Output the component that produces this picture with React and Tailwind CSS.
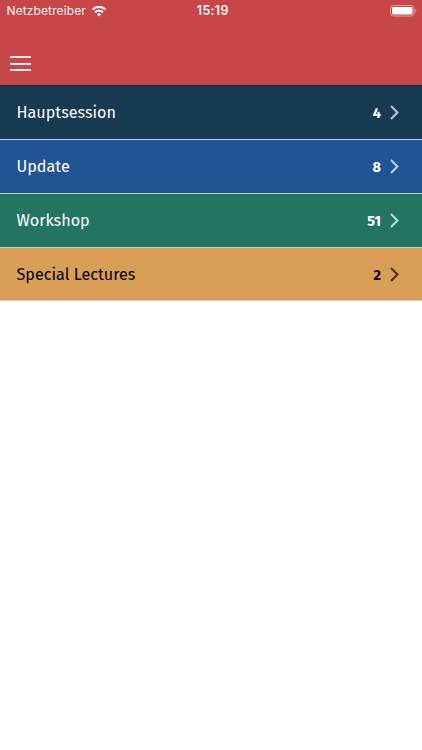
const sessions = [
  { label: "Hauptsession", count: 4, row: "bg-[#153a52] text-white h-[55px] border-t border-t-[#1b2c3e] border-b-[#c6ced2]", chevron: "text-[#b5c4d0]" },
  { label: "Update", count: 8, row: "bg-[#205494] text-white h-[54px] border-b-[#c6ced2]", chevron: "text-[#b9cce6]" },
  { label: "Workshop", count: 51, row: "bg-[#227563] text-white h-[54px] border-b-[#c6ced2]", chevron: "text-[#badad2]" },
  { label: "Special Lectures", count: 2, row: "bg-[#da9f56] text-black h-[53px] pt-px border-b-[#e6c9a8]", chevron: "text-[#49351c]" }
];

function StatusBar() {
  return (
    <div className="flex h-[22px] items-center justify-between pl-[6.5px] pr-1 font-['Inter',sans-serif] text-[#fff1f0]">
      <div className="flex flex-1 items-center gap-[6px]">
        <span className="text-[12px] leading-[22px] tracking-[0.11px]">Netzbetreiber</span>
        <svg className="h-[11px] w-[14px]" viewBox="0 0 14 11" fill="none" aria-hidden="true">
          <path d="M.7 3.5a9 9 0 0 1 12.6 0" stroke="currentColor" strokeWidth="2.3" />
          <path d="M3 6.3a5.7 5.7 0 0 1 8 0" stroke="currentColor" strokeWidth="2.1" />
          <path d="M4.8 8.3a3.1 3.1 0 0 1 4.4 0L7 10.5z" fill="currentColor" />
        </svg>
      </div>
      <span className="relative left-[0.5px] text-[12.5px] font-semibold leading-[22px] tracking-[0.3px]">15:19</span>
      <div className="flex flex-1 justify-end">
        <svg className="h-3 w-7" viewBox="0 0 28 12" aria-hidden="true">
          <rect x=".5" y=".5" width="23.5" height="10.5" rx="2.8" fill="none" stroke="#e6a09e" />
          <rect x="2" y="2" width="20.5" height="7.5" rx="1.4" fill="#fff" />
          <path d="M25.3 3.8c1.5.6 1.5 3.3 0 3.9z" fill="#e6a09e" />
        </svg>
      </div>
    </div>
  );
}

function SessionRow({ session }) {
  return (
    <li className={`flex items-center border-b pl-[16.5px] pr-[23px] ${session.row}`}>
      <span className="flex-1 pt-px text-[16.2px] leading-6">{session.label}</span>
      <span className="pt-px text-[14.5px] font-bold leading-6">{session.count}</span>
      <svg className={`ml-[9px] h-4 w-[9px] ${session.chevron}`} viewBox="0 0 9 16" fill="none" aria-hidden="true">
        <path d="M1 1 7.4 7.5 1 14" stroke="currentColor" strokeWidth="2.1" />
      </svg>
    </li>
  );
}

export default function App() {
  return (
    <main className="min-h-screen bg-white font-['Fira_Sans','Noto_Sans',sans-serif]">
      <header className="h-[85px] bg-[#c74648]">
        <StatusBar />
        <button className="ml-[10px] mt-[34px] flex h-[15px] w-[21px] flex-col justify-between" type="button" aria-label="Menu">
          <span className="h-[2px] w-full bg-[#fbe4e1]" />
          <span className="h-[2px] w-full bg-[#fbe4e1]" />
          <span className="h-[2px] w-full bg-[#fbe4e1]" />
        </button>
      </header>
      <ul>
        {sessions.map((session) => (
          <SessionRow key={session.label} session={session} />
        ))}
      </ul>
    </main>
  );
}
